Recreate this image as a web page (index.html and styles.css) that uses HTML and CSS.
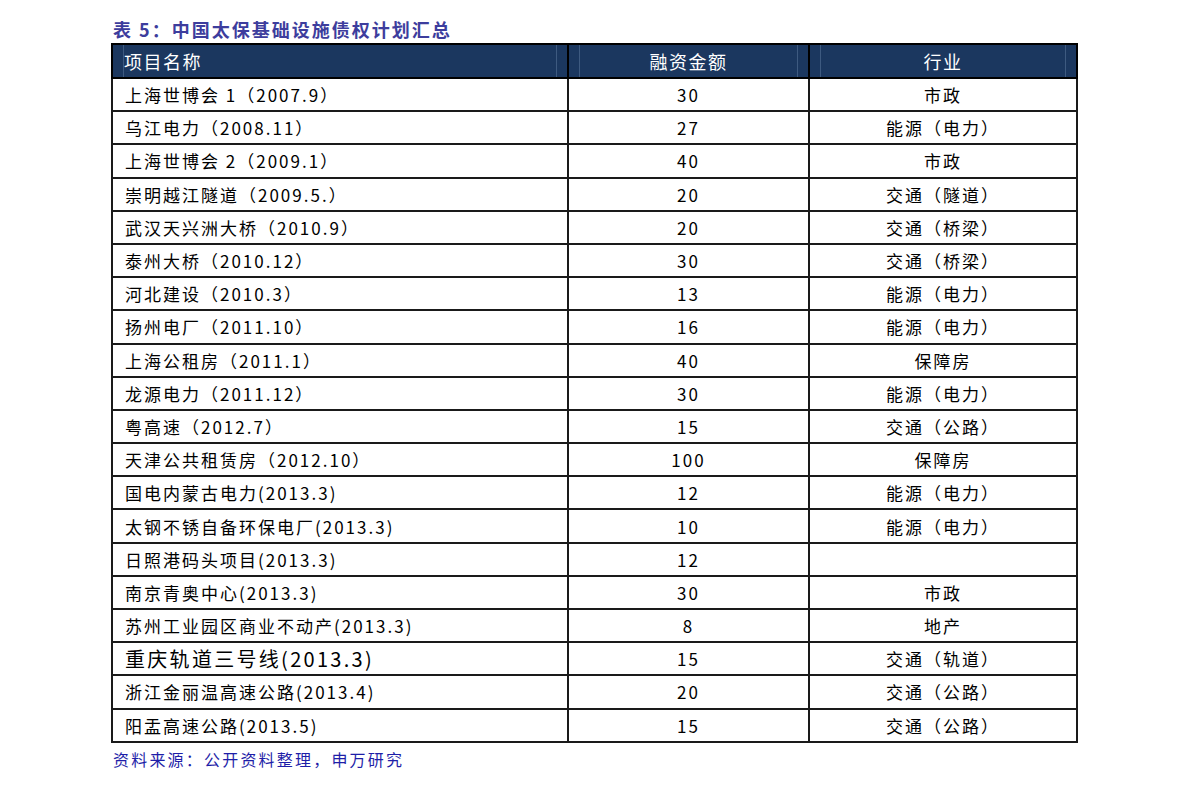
FILE: index.html
```html
<!DOCTYPE html>
<html lang="zh">
<head>
<meta charset="utf-8">
<link rel="stylesheet" href="styles.css">
</head>
<body>
<div class="page">
  <div class="title">表 5：中国太保基础设施债权计划汇总</div>
  <table class="tbl">
    <colgroup><col class="c1"><col class="c2"><col class="c3"></colgroup>
    <thead>
      <tr>
        <th class="left"><div class="hin">项目名称</div></th>
        <th><div class="hin">融资金额</div></th>
        <th><div class="hin">行业</div></th>
      </tr>
    </thead>
    <tbody>
      <tr><td class="name">上海世博会 1（2007.9）</td><td>30</td><td>市政</td></tr>
      <tr><td class="name">乌江电力（2008.11）</td><td>27</td><td>能源（电力）</td></tr>
      <tr><td class="name">上海世博会 2（2009.1）</td><td>40</td><td>市政</td></tr>
      <tr><td class="name">崇明越江隧道（2009.5.）</td><td>20</td><td>交通（隧道）</td></tr>
      <tr><td class="name">武汉天兴洲大桥（2010.9）</td><td>20</td><td>交通（桥梁）</td></tr>
      <tr><td class="name">泰州大桥（2010.12）</td><td>30</td><td>交通（桥梁）</td></tr>
      <tr><td class="name">河北建设（2010.3）</td><td>13</td><td>能源（电力）</td></tr>
      <tr><td class="name">扬州电厂（2011.10）</td><td>16</td><td>能源（电力）</td></tr>
      <tr><td class="name">上海公租房（2011.1）</td><td>40</td><td>保障房</td></tr>
      <tr><td class="name">龙源电力（2011.12）</td><td>30</td><td>能源（电力）</td></tr>
      <tr><td class="name">粤高速（2012.7）</td><td>15</td><td>交通（公路）</td></tr>
      <tr><td class="name">天津公共租赁房（2012.10）</td><td>100</td><td>保障房</td></tr>
      <tr><td class="name">国电内蒙古电力(2013.3)</td><td>12</td><td>能源（电力）</td></tr>
      <tr><td class="name">太钢不锈自备环保电厂(2013.3)</td><td>10</td><td>能源（电力）</td></tr>
      <tr><td class="name">日照港码头项目(2013.3)</td><td>12</td><td></td></tr>
      <tr><td class="name">南京青奥中心(2013.3)</td><td>30</td><td>市政</td></tr>
      <tr><td class="name">苏州工业园区商业不动产(2013.3)</td><td>8</td><td>地产</td></tr>
      <tr><td class="name big">重庆轨道三号线(2013.3)</td><td>15</td><td>交通（轨道）</td></tr>
      <tr><td class="name">浙江金丽温高速公路(2013.4)</td><td>20</td><td>交通（公路）</td></tr>
      <tr><td class="name">阳盂高速公路(2013.5)</td><td>15</td><td>交通（公路）</td></tr>
    </tbody>
  </table>
  <div class="source">资料来源：公开资料整理，申万研究</div>
</div>
</body>
</html>
```
FILE: styles.css
```css
html, body {
  margin: 0;
  padding: 0;
  background: #ffffff;
}
body {
  font-family: "Noto Sans CJK SC", "Noto Sans", sans-serif;
  color: #000;
}
.page {
  width: 1191px;
  height: 788px;
  padding-left: 111px;
  box-sizing: border-box;
}
.title {
  height: 43px;
  box-sizing: border-box;
  padding-top: 17px;
  padding-left: 2px;
  font-size: 18px;
  line-height: 24px;
  font-weight: 700;
  color: #3d3d9d;
  letter-spacing: 2px;
  white-space: nowrap;
}
.tbl {
  width: 965px;
  border-collapse: collapse;
  table-layout: fixed;
  border: 2px solid #000;
}
.c1 { width: 456px; }
.c2 { width: 241px; }
.c3 { width: 268px; }
.tbl th {
  background: #1b375f;
  color: #ffffff;
  font-weight: 400;
  font-size: 18px;
  letter-spacing: 1.5px;
  height: 32px;
  padding: 0 10px;
  border-top: 1px solid #8a8a8a;
  border-left: 2px solid #000;
  border-right: 2px solid #000;
  border-bottom: 2px solid #000;
  text-align: center;
}
.tbl th.left {
  text-align: left;
  padding-left: 10px;
}
.hin {
  height: 32px;
  line-height: 32px;
  border-left: 1px solid #3e5a80;
  border-right: 1px solid #3e5a80;
}
.tbl td {
  height: 31.2px;
  padding: 0;
  border: 2px solid #1a1a1a;
  font-size: 17px;
  line-height: 31px;
  text-align: center;
  white-space: nowrap;
  letter-spacing: 2px;
}
.tbl td.name {
  text-align: left;
  padding-left: 12px;
  letter-spacing: 2px;
}
.tbl td.big {
  font-size: 20px;
  letter-spacing: 2.3px;
}
.source {
  padding-top: 4px;
  padding-left: 2px;
  font-size: 16px;
  line-height: 24px;
  letter-spacing: 2.2px;
  color: #1e1ea8;
  white-space: nowrap;
}
```
